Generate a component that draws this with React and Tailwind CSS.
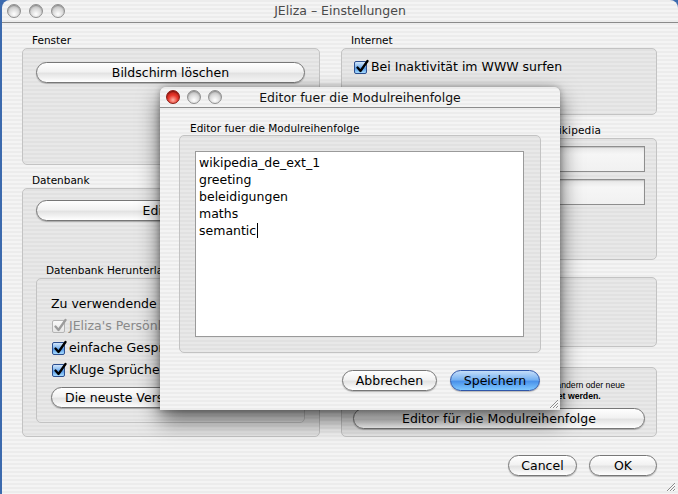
import React from 'react';

const stripes =
  'bg-[image:repeating-linear-gradient(to_bottom,#ececec_0px,#ececec_2px,#f4f4f4_2px,#f4f4f4_4px)]';
const boxStripes =
  'bg-[image:repeating-linear-gradient(to_bottom,#e1e1e1_0px,#e1e1e1_2px,#e8e8e8_2px,#e8e8e8_4px)]';

const Light = ({ red }) => (
  <span
    className={
      red
        ? 'block w-[14px] h-[14px] rounded-full border border-[#8a1a12] bg-[radial-gradient(circle_at_50%_75%,#ffb3a6_0%,#e8372b_45%,#a3120b_100%)] shadow-[inset_0_1px_1px_rgba(0,0,0,0.35)]'
        : 'block w-[14px] h-[14px] rounded-full border border-[#8f8f8f] bg-[radial-gradient(circle_at_50%_75%,#ffffff_0%,#dcdcdc_45%,#a9a9a9_100%)] shadow-[inset_0_1px_1px_rgba(0,0,0,0.25)]'
    }
  />
);

const Button = ({ children, className = '', primary }) => (
  <button
    className={
      (primary
        ? 'border-[#2f56a8] bg-[linear-gradient(to_bottom,#c4ddf9_0%,#79b3f2_45%,#4a92ea_55%,#7fc8ff_100%)] '
        : 'border-[#777] bg-[linear-gradient(to_bottom,#ffffff_0%,#f2f2f2_45%,#e3e3e3_55%,#ffffff_100%)] ') +
      'h-[21px] rounded-full border text-[12.5px] leading-[19px] text-black shadow-[0_1px_1px_rgba(0,0,0,0.25)] whitespace-nowrap overflow-hidden ' +
      className
    }
  >
    {children}
  </button>
);

const Check = ({ disabled }) => (
  <span
    className={
      (disabled
        ? 'border-[#b4b4b4] bg-[linear-gradient(to_bottom,#fafafa,#e6e6e6)] '
        : 'border-[#2d4f8f] bg-[linear-gradient(to_bottom,#d2e6fb_0%,#80b6ef_45%,#5497e6_55%,#a6dcff_100%)] ') +
      'relative block w-[13px] h-[13px] rounded-[2px] border shrink-0'
    }
  >
    <svg viewBox="0 0 14 14" className="absolute left-[0px] top-[-3px] w-[14px] h-[15px]">
      <path
        d="M2.5 8 L5.5 11.5 L12.5 1.5"
        fill="none"
        stroke={disabled ? '#9c9c9c' : '#000'}
        strokeWidth="2.3"
        strokeLinejoin="round"
        strokeLinecap="round"
      />
    </svg>
  </span>
);

const CheckRow = ({ children, disabled, className = '' }) => (
  <div className={'flex items-center gap-[4px] h-[22px] whitespace-nowrap ' + className}>
    <Check disabled={disabled} />
    <span className={disabled ? 'text-[#8a8a8a]' : 'text-black'}>{children}</span>
  </div>
);

const Label = ({ children, className = '' }) => (
  <div className={'h-[15px] pl-[10px] text-[10.5px] leading-[15px] text-black whitespace-nowrap ' + className}>
    {children}
  </div>
);

const Grip = ({ className = '' }) => (
  <svg viewBox="0 0 12 12" className={'w-[12px] h-[12px] ' + className}>
    <path d="M11 3 L3 11 M11 6 L6 11 M11 9 L9 11" stroke="#8c8c8c" strokeWidth="1" />
    <path d="M11.6 3.6 L3.6 11.6 M11.6 6.6 L6.6 11.6 M11.6 9.6 L9.6 11.6" stroke="#fff" strokeWidth="0.8" />
  </svg>
);

const Field = ({ label }) => (
  <div className="flex items-center justify-end gap-2 h-[26px]">
    <span className="text-[12px] whitespace-nowrap">{label}</span>
    <div className="w-[190px] h-[26px] border border-[#8e8e8e] bg-[linear-gradient(to_bottom,#e6e6e6,#f6f6f6_30%,#f1f1f1)] shadow-[inset_0_1px_1px_rgba(0,0,0,0.15)]" />
  </div>
);

const Dialog = () => (
  <div className="absolute left-[158px] top-[64px] w-[400px] h-[323px] flex flex-col rounded-t-[6px] overflow-hidden shadow-[0_10px_22px_rgba(0,0,0,0.6),0_0_6px_rgba(0,0,0,0.3)]">
    <div className={'relative h-[21px] flex items-center border-b border-[#8c8c8c] ' + stripes}>
      <div className="flex gap-[7px] pl-[6px]">
        <Light red />
        <Light />
        <Light />
      </div>
      <div className="absolute inset-0 text-center text-[12.5px] leading-[21px] text-[#111]">
        Editor fuer die Modulreihenfolge
      </div>
    </div>
    <div className={'relative flex-1 flex flex-col px-[19px] pt-[13px] ' + stripes}>
      <div className="h-[14px] pl-[11px] text-[10.5px] leading-[14px] whitespace-nowrap">
        Editor fuer die Modulreihenfolge
      </div>
      <div className={'h-[218px] p-[15px] pr-[16px] rounded-[5px] border border-[#c3c3c3] ' + boxStripes}>
        <div className="h-full bg-white border border-[#9a9a9a] pl-[3px] pt-[2px] text-[12.5px] leading-[17px] text-black">
          <div>wikipedia_de_ext_1</div>
          <div>greeting</div>
          <div>beleidigungen</div>
          <div>maths</div>
          <div className="flex items-center">
            semantic
            <span className="inline-block w-[1px] h-[15px] bg-black ml-[1px]" />
          </div>
        </div>
      </div>
      <div className="flex justify-end gap-[13px] mt-[17px] pr-[1px]">
        <Button className="w-[95px]">Abbrechen</Button>
        <Button primary className="w-[90px]">Speichern</Button>
      </div>
      <Grip className="absolute right-[1px] bottom-[1px]" />
    </div>
  </div>
);

export default function App() {
  return (
    <div className="w-[678px] h-[494px] bg-[#3c6aae] pl-[2px] overflow-hidden font-['DejaVu_Sans',sans-serif]">
      <div className="relative h-full flex flex-col rounded-t-[8px] overflow-hidden">
        <div className={'relative h-[23px] flex items-center border-b border-[#8a8a8a] ' + stripes}>
          <div className="flex gap-[8px] pl-[5px]">
            <Light />
            <Light />
            <Light />
          </div>
          <div className="absolute inset-0 text-center text-[12.5px] leading-[22px] text-[#4a4a4a]">
            JEliza – Einstellungen
          </div>
        </div>

        <div className={'relative flex-1 flex flex-col pl-[20px] pr-[21px] pt-[10px] ' + stripes}>
          <div className="flex gap-[21px] text-[12.5px]">
            {/* linke Spalte */}
            <div className="w-[298px] flex flex-col">
              <Label>Fenster</Label>
              <div className={'h-[117px] rounded-[5px] border border-[#c3c3c3] pt-[13px] pl-[13px] pr-[14px] ' + boxStripes}>
                <Button className="w-full">Bildschirm löschen</Button>
              </div>

              <Label className="mt-[8px]">Datenbank</Label>
              <div className={'h-[249px] rounded-[5px] border border-[#c3c3c3] pt-[11px] pl-[13px] pr-[14px] ' + boxStripes}>
                <Button className="w-full">Editieren</Button>
                <Label className="mt-[42px]">Datenbank Herunterladen</Label>
                <div className={'h-[145px] rounded-[5px] border border-[#c3c3c3] pt-[14px] pl-[14px] pr-[12px] ' + boxStripes}>
                  <div className="h-[22px] leading-[22px] whitespace-nowrap">Zu verwendende Teile:</div>
                  <CheckRow disabled className="pl-[1px]">JEliza's Persönlichkeit</CheckRow>
                  <CheckRow className="pl-[1px]">einfache Gespräche</CheckRow>
                  <CheckRow className="pl-[1px]">Kluge Sprüche</CheckRow>
                  <Button className="w-[240px] mt-[6px] text-left pl-[13px]">Die neuste Version herunterladen</Button>
                </div>
              </div>
            </div>

            {/* rechte Spalte */}
            <div className="w-[316px] flex flex-col">
              <Label>Internet</Label>
              <div className={'h-[67px] rounded-[5px] border border-[#c3c3c3] pt-[3px] pl-[12px] ' + boxStripes}>
                <CheckRow className="h-[30px]">Bei Inaktivität im WWW surfen</CheckRow>
              </div>

              <Label className="mt-[8px] tracking-[0.15px]">Informationen über Begriffe aus der Wikipedia</Label>
              <div className={'h-[122px] flex flex-col gap-[7px] rounded-[5px] border border-[#c3c3c3] pt-[7px] pr-[11px] ' + boxStripes}>
                <Field label="Suchbegriff:" />
                <Field label="Artikel:" />
              </div>

              <Label className="mt-[2px]">Module</Label>
              <div className={'h-[70px] rounded-[5px] border border-[#c3c3c3] ' + boxStripes} />

              <Label className="mt-[5px]">Modulreihenfolge</Label>
              <div className={'h-[70px] rounded-[5px] border border-[#c3c3c3] pt-[12px] px-[11px] ' + boxStripes}>
                <div className="font-['Liberation_Sans',sans-serif] text-[8.7px] leading-[11px] whitespace-nowrap">
                  Hier können Sie einfach die Reihenfolge der Module ändern oder neue
                  <br />
                  Module hinzufügen, danach muss JEliza <b>neu gestartet werden.</b>
                </div>
                <Button className="w-full mt-[6px]">Editor für die Modulreihenfolge</Button>
              </div>
            </div>
          </div>

          <div className="flex justify-end gap-[12px] mt-[18px] text-[12.5px]">
            <Button className="w-[69px]">Cancel</Button>
            <Button className="w-[68px]">OK</Button>
          </div>
          <Grip className="absolute right-[2px] bottom-[2px]" />

          <Dialog />
        </div>
      </div>
    </div>
  );
}
